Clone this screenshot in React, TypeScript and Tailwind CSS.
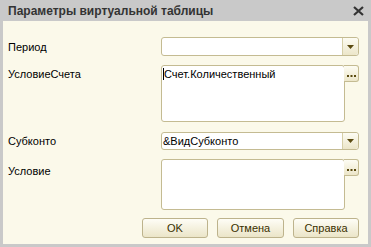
import { ReactNode } from "react";

const font = { fontFamily: '"Liberation Sans", Arial, sans-serif' };

function DropButton() {
  return (
    <div className="w-[16px] self-stretch flex items-center justify-center border-l border-[#d6cfa8] bg-gradient-to-b from-[#fdfcf3] to-[#ece6c9] rounded-r-[3px]">
      <svg width="7" height="4" viewBox="0 0 7 4">
        <path d="M0 0h7L3.5 4z" fill="#5a4a10" />
      </svg>
    </div>
  );
}

function DotsButton() {
  return (
    <div className="w-[15px] h-[17px] ml-[-1px] flex items-end justify-center pb-[4px] border border-[#c4bb92] border-l-0 rounded-r-[3px] bg-gradient-to-b from-[#fdfcf3] to-[#ece6c9]">
      <svg width="9" height="2" viewBox="0 0 9 2">
        <rect x="0" y="0" width="2" height="2" fill="#5a4a10" />
        <rect x="3.5" y="0" width="2" height="2" fill="#5a4a10" />
        <rect x="7" y="0" width="2" height="2" fill="#5a4a10" />
      </svg>
    </div>
  );
}

function Row({ label, children, className }: { label: string; children: ReactNode; className: string }) {
  return (
    <div className={`flex ${className}`}>
      <div className="w-[153px] shrink-0 text-[11px] text-black leading-[14px]">{label}</div>
      <div className="flex-1 flex">{children}</div>
    </div>
  );
}

function Btn({ text, className }: { text: string; className?: string }) {
  return (
    <div
      className={`w-[66px] h-[20px] flex items-center justify-center text-[11px] text-[#3a3000] border border-[#bdb38c] rounded-[3px] bg-gradient-to-b from-[#fefdf6] to-[#ebe5c8] ${className ?? ""}`}
    >
      {text}
    </div>
  );
}

export default function App() {
  return (
    <div className="w-[371px] h-[247px] bg-[#c9c9c9] flex flex-col" style={font}>
      <div className="h-[21px] flex items-center justify-between pl-[8px] pr-[7px]">
        <span className="text-[12px] font-bold text-[#333] leading-none">Параметры виртуальной таблицы</span>
        <svg width="11" height="10" viewBox="0 0 11 10">
          <path d="M1 1l9 8M10 1l-9 8" stroke="#333" strokeWidth="2.2" />
        </svg>
      </div>
      <div className="flex-1 mx-[3px] mb-[3px] bg-[#fbf9ea] pl-[5px] pr-[9px] pt-[16px] flex flex-col">
        <Row label="Период" className="h-[19px] items-center">
          <div className="flex-1 flex bg-white border border-[#c4bb92] rounded-[3px] h-[19px]">
            <div className="flex-1" />
            <DropButton />
          </div>
        </Row>
        <Row label="УсловиеСчета" className="mt-[9px] h-[57px] pt-[2px]">
          <div className="flex-1 flex -mt-[2px]">
            <div className="flex-1 bg-white border border-[#c4bb92] rounded-[3px] h-[57px] pl-[1px] pt-[1px] text-[11px] leading-[14px] text-black">
              <span className="border-l border-black">Счет.Количественный</span>
            </div>
            <DotsButton />
          </div>
        </Row>
        <Row label="Субконто" className="mt-[10px] h-[18px] items-center">
          <div className="flex-1 flex bg-white border border-[#c4bb92] rounded-[3px] h-[18px] items-center">
            <div className="flex-1 pl-[1px] text-[11px] leading-[14px] text-black">&amp;ВидСубконто</div>
            <DropButton />
          </div>
        </Row>
        <Row label="Условие" className="mt-[9px] h-[51px] pt-[5px]">
          <div className="flex-1 flex -mt-[5px]">
            <div className="flex-1 bg-white border border-[#c4bb92] rounded-[3px] h-[51px]" />
            <DotsButton />
          </div>
        </Row>
        <div className="mt-[8px] flex justify-end gap-[9px] pr-0">
          <Btn text="OK" className="bg-gradient-to-b from-[#fbf8e8] to-[#e3dcba] border-[#a79d70]" />
          <Btn text="Отмена" className="w-[67px]" />
          <Btn text="Справка" />
        </div>
      </div>
    </div>
  );
}
